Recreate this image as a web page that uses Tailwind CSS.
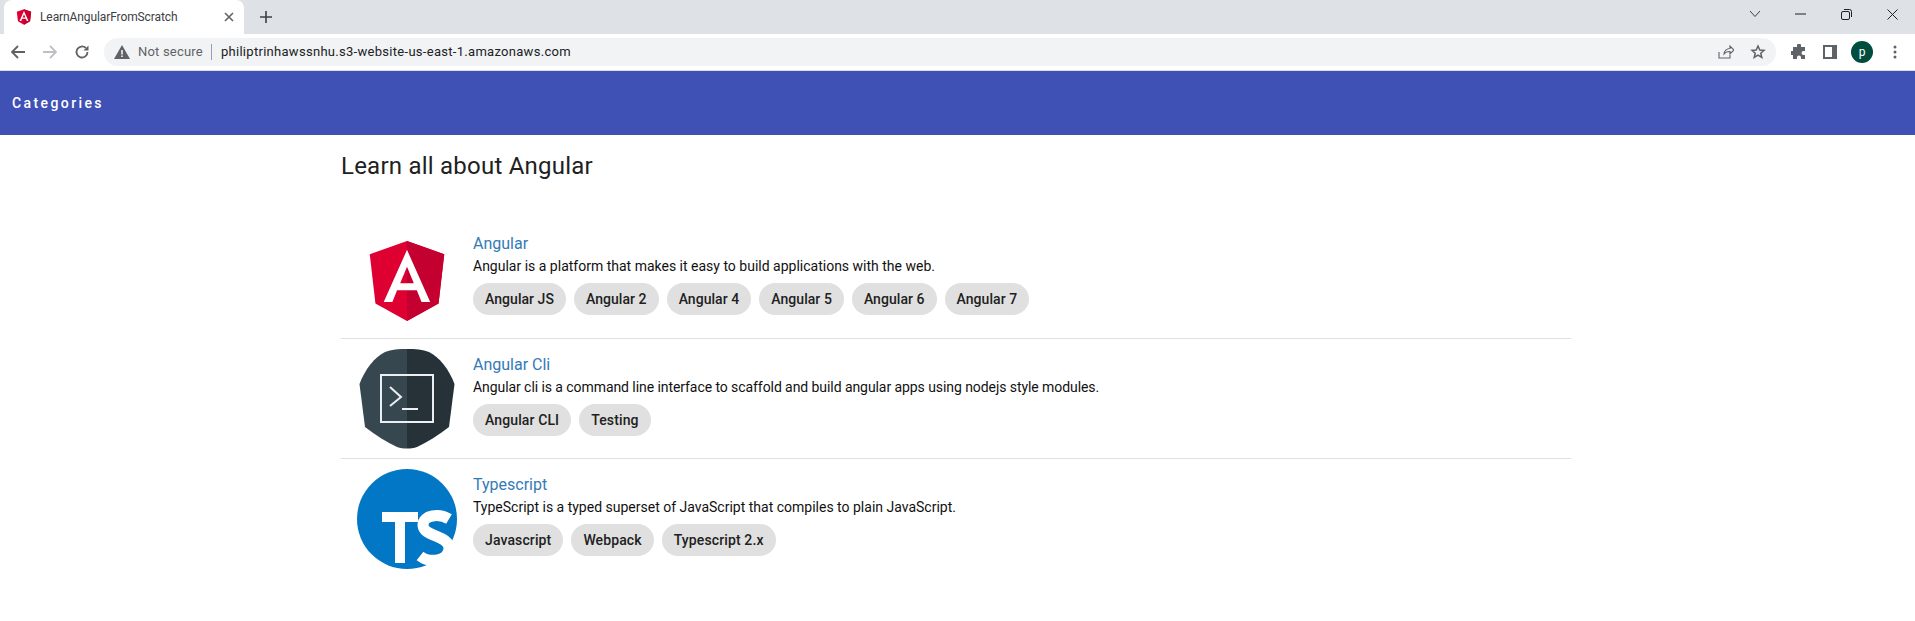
<!DOCTYPE html>
<html lang="en">
  <head>
    <meta charset="UTF-8" />
    <title>LearnAngularFromScratch</title>
    <script src="https://cdn.jsdelivr.net/npm/@tailwindcss/browser@4"></script>
  </head>
  <body class="bg-white h-[621px] overflow-hidden font-['Roboto',sans-serif] text-[#212121]">
    <!-- BROWSER TAB STRIP -->
    <div class="h-[34px] bg-[#dee1e6] flex items-end pl-1">
      <div class="relative w-[240px] h-[34px] bg-white rounded-t-lg flex items-center pl-3 pr-[10px]">
        <svg class="w-[16px] h-[16px] shrink-0" viewBox="28 26 194 208">
          <polygon fill="#dd0031" points="125,30 31.9,63.2 46.1,186.3 125,230 203.9,186.3 218.1,63.2" />
          <polygon fill="#c3002f" points="125,30 125,230 203.9,186.3 218.1,63.2" />
          <path fill="#fff" d="M125 52.1L66.8 182.6h21.7l11.7-29.2h49.4l11.7 29.2h21.7L125 52.1zM142 135.4h-34l17-40.9 17 40.9z" />
        </svg>
        <span class="ml-2 text-[12px] tracking-[-.1px] text-[#3c4043] flex-1">LearnAngularFromScratch</span>
        <svg class="w-[10px] h-[10px]" viewBox="0 0 10 10" fill="none" stroke="#5f6368" stroke-width="1.6"><path d="M1 1l8 8M9 1l-8 8" /></svg>
      </div>
      <svg class="w-[14px] h-[14px] ml-[15px] mb-[10px]" viewBox="0 0 14 14" fill="none" stroke="#3c4043" stroke-width="1.6"><path d="M7 1v12M1 7h12" /></svg>
      <div class="flex-1"></div>
      <div class="flex items-center h-[28px] self-start text-[#3c4043]">
        <svg class="w-[12px] h-[8px] mr-[34px]" viewBox="0 0 12 8" fill="none" stroke="#3c4043" stroke-width="1"><path d="M1 1l5 5.5L11 1" /></svg>
        <svg class="w-[11px] h-[2px] mr-[35px]" viewBox="0 0 11 2" fill="none" stroke="#202124" stroke-width="1"><path d="M0 1h11" /></svg>
        <svg class="w-[11px] h-[11px] mr-[35px]" viewBox="0 0 11 11" fill="none" stroke="#202124" stroke-width="1"><rect x="0.5" y="2.5" width="8" height="8" rx="1.5" /><path d="M3 .5h5.5a2 2 0 012 2V8" /></svg>
        <svg class="w-[11px] h-[11px] mr-[17px]" viewBox="0 0 11 11" fill="none" stroke="#202124" stroke-width="1"><path d="M.5.5l10 10M10.500.5l-10 10" /></svg>
      </div>
    </div>

    <!-- BROWSER TOOLBAR -->
    <div class="h-[37px] bg-white border-b border-[#dadce0] flex items-start pt-[4px]">
      <div class="w-[104px] h-[28px] flex items-center pl-[10px] gap-[16px]">
        <svg class="w-[16px] h-[16px]" viewBox="0 0 16 16" fill="none" stroke="#5f6368" stroke-width="1.8"><path d="M15 8H2M8 2L2 8l6 6" /></svg>
        <svg class="w-[16px] h-[16px]" viewBox="0 0 16 16" fill="none" stroke="#bdc1c6" stroke-width="1.8"><path d="M1 8h13M8 2l6 6-6 6" /></svg>
        <svg class="w-[16px] h-[16px]" viewBox="0 0 16 16" fill="none" stroke="#5f6368" stroke-width="1.8"><path d="M13.500 8a5.500 5.500 0 11-1.700-4" /><path fill="#5f6368" stroke="none" d="M14.500 1.500v5h-5z" /></svg>
      </div>
      <div class="w-[1672px] h-[28px] rounded-full bg-[#f1f3f4] flex items-center pl-[10px] pr-[10px] text-[13px]">
        <svg class="w-[16px] h-[14px]" viewBox="0 0 16 14"><path fill="#5f6368" d="M8 0l8 14H0z" /><path fill="#f1f3f4" d="M7.200 5h1.600v4.500H7.200zM7.200 10.500h1.600V12H7.200z" /></svg>
        <span class="ml-[8px] tracking-[.2px] text-[#5f6368]">Not secure</span>
        <span class="w-px h-[16px] bg-[#9aa0a6] ml-[8px] mr-[9px]"></span>
        <span class="text-[#202124] tracking-[.29px] flex-1">philiptrinhawssnhu.s3-website-us-east-1.amazonaws.com</span>
        <svg class="w-[16px] h-[16px] mr-[16px]" viewBox="0 0 16 16" fill="none" stroke="#5f6368" stroke-width="1.1"><path d="M1 8v6h11v-3M6 10c0-3 3-5.500 6-5.500V2l4 4-4 4V7.500C9 7.500 7 8.500 6 10z" /></svg>
        <svg class="w-[16px] h-[16px]" viewBox="0 0 16 16" fill="none" stroke="#5f6368" stroke-width="1.5"><path d="M8 2l1.800 4 4.200.4-3.200 2.800 1 4.300L8 11.200 4.200 13.500l1-4.300L2 6.400 6.200 6z" /></svg>
      </div>
      <div class="flex-1 h-[28px] flex items-center pl-[15px]">
        <svg class="w-[16px] h-[16px]" viewBox="0 0 16 16" fill="#5f6368"><path d="M6 1.500a2 2 0 014 0V3h4v4h-1.500a2 2 0 000 4H14v4h-4v-1.500a2 2 0 00-4 0V15H2v-4H.5a2 2 0 010-4H2V3h4z" /></svg>
        <svg class="w-[14px] h-[14px] ml-[16px]" viewBox="0 0 14 14"><rect width="14" height="14" fill="#5f6368" /><rect x="2" y="2" width="7" height="10" fill="#fff" /></svg>
        <span class="w-[22px] h-[22px] rounded-full bg-[#004d40] text-white text-[12px] leading-[22px] text-center ml-[14px]">p</span>
        <svg class="w-[4px] h-[14px] ml-[20px]" viewBox="0 0 4 14" fill="#5f6368"><circle cx="2" cy="2" r="1.500" /><circle cx="2" cy="7" r="1.500" /><circle cx="2" cy="12" r="1.500" /></svg>
      </div>
    </div>

    <!-- TOOLBAR -->
    <header class="h-[64px] bg-[#3f51b5] flex items-center pl-3 text-white">
      <span class="text-[14px] font-medium tracking-[2.4px]">Categories</span>
    </header>

    <!-- CONTENT -->
    <main class="ml-[341px] w-[1230px]">
      <h1 class="text-[24px] leading-[32px] pt-[15px] mb-[37px] tracking-[.23px]">Learn all about Angular</h1>

      <div class="h-[120px] border-b border-[#e0e0e0] flex pl-4 pt-[10px]">
        <svg class="w-[100px] h-[100px] shrink-0" viewBox="0 0 250 250">
          <polygon fill="#dd0031" points="125,30 31.9,63.2 46.1,186.3 125,230 203.9,186.3 218.1,63.2" />
          <polygon fill="#c3002f" points="125,30 125,230 203.9,186.3 218.1,63.2" />
          <path fill="#fff" d="M125 52.1L66.8 182.6h21.7l11.7-29.2h49.4l11.700 29.2h21.7L125 52.1zM142 135.400h-34l17-40.900 17 40.900z" />
        </svg>
        <div class="ml-4">
          <a class="block text-[16px] leading-[24px] text-[#337ab7] mt-[3px]">Angular</a>
          <p class="text-[14px] leading-[20px] text-[#111]">Angular is a platform that makes it easy to build applications with the web.</p>
          <div class="flex gap-2 mt-[7px] text-[14px] font-medium tracking-[.05px]">
            <span class="h-[32px] px-3 rounded-full bg-[#e0e0e0] flex items-center">Angular JS</span>
            <span class="h-[32px] px-3 rounded-full bg-[#e0e0e0] flex items-center">Angular 2</span>
            <span class="h-[32px] px-3 rounded-full bg-[#e0e0e0] flex items-center">Angular 4</span>
            <span class="h-[32px] px-3 rounded-full bg-[#e0e0e0] flex items-center">Angular 5</span>
            <span class="h-[32px] px-3 rounded-full bg-[#e0e0e0] flex items-center">Angular 6</span>
            <span class="h-[32px] px-3 rounded-full bg-[#e0e0e0] flex items-center">Angular 7</span>
          </div>
        </div>
      </div>

      <div class="h-[120px] border-b border-[#e0e0e0] flex pl-4 pt-[10px]">
        <svg class="w-[100px] h-[100px] shrink-0" viewBox="0 0 100 100">
          <path fill="#37474f" d="M50 0C42 0 34 .5 28 3 18 8 8 20 2.500 35L8 78c10 8 22 15 32 20 3 1 7 1.500 10 1.500z" />
          <path fill="#263238" d="M50 0c8 0 16 .5 22 3 10 5 20 17 25.500 32L92 78c-10 8-22 15-32 20-3 1-7 1.500-10 1.500z" />
          <rect x="24" y="26" width="52" height="47" fill="none" stroke="#eceff1" stroke-width="2" />
          <path fill="none" stroke="#eceff1" stroke-width="2" d="M33 38l11 10-11 9M45 60h16" />
        </svg>
        <div class="ml-4">
          <a class="block text-[16px] leading-[24px] text-[#337ab7] mt-[4px]">Angular Cli</a>
          <p class="text-[14px] leading-[20px] text-[#111] tracking-[-.07px]">Angular cli is a command line interface to scaffold and build angular apps using nodejs style modules.</p>
          <div class="flex gap-2 mt-[7px] text-[14px] font-medium tracking-[.12px]">
            <span class="h-[32px] px-3 rounded-full bg-[#e0e0e0] flex items-center">Angular CLI</span>
            <span class="h-[32px] px-3 rounded-full bg-[#e0e0e0] flex items-center">Testing</span>
          </div>
        </div>
      </div>

      <div class="h-[120px] flex pl-4 pt-[10px]">
        <svg class="w-[100px] h-[100px] shrink-0" viewBox="0 0 100 100">
          <circle cx="50" cy="50" r="50" fill="#0277c5" />
          <path fill="#fff" d="M25 43h36v10H48v41H38V53H25z" />
          <path fill="none" stroke="#fff" stroke-width="11" d="M92 50C82 44 66 46 66 56 66 68 92 66 92 79 92 93 72 94 63 87" />
        </svg>
        <div class="ml-4">
          <a class="block text-[16px] leading-[24px] text-[#337ab7] mt-[4px]">Typescript</a>
          <p class="text-[14px] leading-[20px] text-[#111]">TypeScript is a typed superset of JavaScript that compiles to plain JavaScript.</p>
          <div class="flex gap-2 mt-[7px] text-[14px] font-medium tracking-[.12px]">
            <span class="h-[32px] px-3 rounded-full bg-[#e0e0e0] flex items-center">Javascript</span>
            <span class="h-[32px] px-3 rounded-full bg-[#e0e0e0] flex items-center">Webpack</span>
            <span class="h-[32px] px-3 rounded-full bg-[#e0e0e0] flex items-center">Typescript 2.x</span>
          </div>
        </div>
      </div>
    </main>
  </body>
</html>
